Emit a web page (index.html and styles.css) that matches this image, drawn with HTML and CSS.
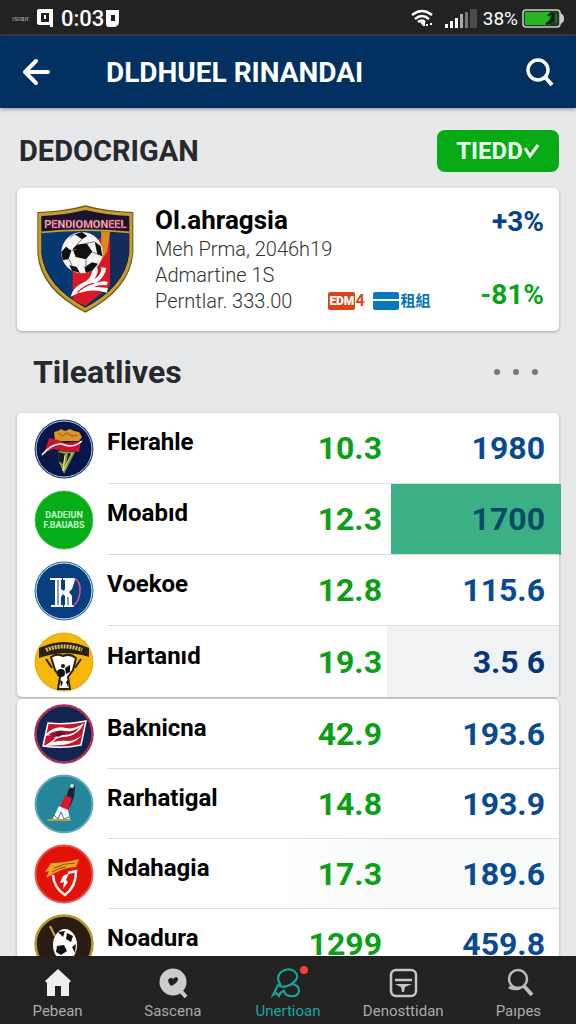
FILE: index.html
```html
<!DOCTYPE html>
<html lang="id">
<head>
<meta charset="utf-8">
<meta name="viewport" content="width=device-width, initial-scale=1">
<title>DLDHUEL RINANDAI</title>
<link rel="stylesheet" href="styles.css">
</head>
<body>
<div class="status">
  <span class="carrier">ısıaır</span>
  <svg class="sim" viewBox="0 0 16 18" width="16" height="18"><path fill="#fff" fill-rule="evenodd" d="M2 0h14v18h-3v-2H2a2 2 0 0 1-2-2V2a2 2 0 0 1 2-2zM4 4v9h8V4z"/><path stroke="#fff" stroke-width="2" d="M8 6v4"/></svg>
  <span class="clock">0:03</span>
  <svg class="badge" viewBox="0 0 13 17" width="13" height="17"><path fill="#fff" fill-rule="evenodd" d="M0 0h13v11q0 6-6 6H3q-3 0-3-3zM5 5v6h4V5z"/></svg>
  <span class="spacer"></span>
  <svg class="wifi" viewBox="0 0 22 18" width="22" height="18" fill="none" stroke="#fff" stroke-width="2.4"><path d="M1 6q10-8 20 0M4 10q7-6 14 0M7 13q4-3 7 0"/><path fill="#fff" stroke="none" d="M9 13l5 0v4h-2zM15 15h2v2h-2zM19 14h2v2h-2z"/></svg>
  <svg class="signal" viewBox="0 0 32 19" width="32" height="19"><path fill="#fff" d="M0 15h3v4H0zM5 12h3v7H5zM10 9h3v10h-3z"/><path fill="#aaa" d="M15 5h3v14h-3z"/><path fill="#777" d="M20 3h3v16h-3z"/><path fill="#4b4b4b" d="M25 0h7v19h-7z"/></svg>
  <span class="percent">38%</span>
  <svg class="battery" viewBox="0 0 42 19" width="42" height="19"><path d="M38 4q4 1 4 5.500T38 15z" fill="#ccc"/><rect x="1" y="1" width="37" height="17" rx="3" fill="#17401b" stroke="#c8cdc8" stroke-width="1.500"/><path fill="#27b324" d="M3 3h26l-2 13H3z"/><path d="M26 7q4-5 5-1t-7 9q5-1 8-5" fill="none" stroke="#0b1e0c" stroke-width="2"/><path d="M34 5v9" stroke="#3b573c" stroke-width="2"/></svg>
</div>
<header class="appbar">
  <button class="icon-btn" aria-label="Back"><svg viewBox="0 0 28 28" width="28" height="28" fill="none" stroke="#fff" stroke-width="4" stroke-linecap="round" stroke-linejoin="round"><path d="M14 3L3 14l11 11M4 14h22"/></svg></button>
  <h1 class="appbar-title">DLDHUEL RINANDAI</h1>
  <button class="icon-btn" aria-label="Search"><svg viewBox="0 0 28 28" width="28" height="28" fill="none" stroke="#fff" stroke-width="3.400"><circle cx="12" cy="12" r="10"/><path d="M19 19l7 8" stroke-width="4"/></svg></button>
</header>
<main class="content">
  <div class="section-head">
    <h2 class="heading">DEDOCRIGAN</h2>
    <button class="filter">TIEDD<svg viewBox="0 0 16 14" width="16" height="14"><path d="M1 4l5 8 8-11" fill="none" stroke="#effff0" stroke-width="3"/></svg></button>
  </div>
  <section class="card feature">
    <svg class="crest" viewBox="16 24 294 330" width="98" height="110">
      <path d="M20 48Q100 46 164 28Q230 46 308 48V170Q300 280 164 350Q26 280 20 170z" fill="#6c5716"/>
      <path d="M23 51Q105 48 164 32Q225 48 305 51V170Q296 277 164 346Q32 277 23 170z" fill="#c79d31"/>
      <path d="M32 60Q105 57 164 42Q225 57 296 60V170Q286 270 164 335Q42 270 32 170z" fill="#17152d"/>
      <path d="M34 108Q164 96 294 108V170Q284 268 164 332Q44 268 34 170z" fill="#063873"/>
      <path d="M126 180L238 108V270L164 330L126 312z" fill="#d91925"/>
      <path d="M211 106h27l-8 60-17 26z" fill="#d58b20"/>
      <path d="M238 108h55v60q-5 60-55 108z" fill="#122b5a"/>
      <path d="M32 109Q164 96 296 109" fill="none" stroke="#c79d31" stroke-width="5"/>
      <text class="crest-text" x="164" y="96" text-anchor="middle">PENDIOMONEEL</text>
      <path d="M120 302Q126 272 168 254Q186 240 184 218L200 214Q204 234 190 250Q214 238 212 214L226 216Q224 244 196 260Q216 252 232 258L228 268Q208 264 190 272L232 276L228 290Q196 280 166 286Q140 290 120 302z" fill="#fff"/>
      <path d="M140 290Q160 268 190 262" fill="none" stroke="#d91925" stroke-width="4"/>
      <circle cx="154" cy="170" r="62" fill="#f5f5f5"/>
      <path d="M138 146l30-4 17 25-19 23-31-7-9-24zM132 115l22-7 15 12-15 10zM92 168l14-16 16 12-8 25-18 4zM192 137l18 13 5 31-15-6zM184 199l18 4-17 21-19 7-5-17zM116 207l22 6 10 18-24-7z" fill="#111"/>
      <path d="M118 124l14-9M154 130l-16 16M122 164l14-4M166 190l0 24M185 167l16 8M114 189l10 18M168 142l24-5" stroke="#777" stroke-width="3"/>
    </svg>
    <div class="feature-info">
      <h3 class="feature-name">Ol.ahragsia</h3>
      <p class="feature-line">Meh Prma, 2046h19</p>
      <p class="feature-line">Admartine 1S</p>
      <div class="feature-last"><p class="feature-line">Perntlar. 333.00</p>
        <span class="tag tag-red"><b class="tag-box">EDM</b>4</span>
        <span class="tag tag-blue"><i class="flag"></i>租組</span>
      </div>
    </div>
    <div class="feature-stats"><span class="stat-blue">+3%</span><span class="stat-green">-81%</span></div>
  </section>
  <div class="section-head list-head">
    <h2 class="heading">Tileatlives</h2>
    <button class="more" aria-label="More"><i></i><i></i><i></i></button>
  </div>
  <table class="card teams">
    <colgroup><col class="c-logo"><col><col class="c-odd"><col class="c-pts"></colgroup>
    <tbody>
    <tr><td class="logo"><svg viewBox="0 0 60 60" width="60" height="60"><circle cx="30" cy="30" r="29.500" fill="#17386e"/><circle cx="30" cy="30" r="28" fill="#07164a" stroke="#b8c6dc"/><path d="M24 32l17 1-11 22-5-12z" fill="#8c9b32"/><path d="M24 33l7 2-2 10-4-3zM34 34l4 1-6 12z" fill="#101a22"/><path d="M31 36l-2 16 9-18" fill="none" stroke="#f1eaa6"/><path d="M20 13l4-1 3-2 4 2 5-2 4 2 5 1 3 5-3 4H21z" fill="#d99527"/><path d="M24 14l4 3 5-3 5 3 5-1" fill="none" stroke="#9b5d12"/><path d="M15 19q8 1 17 5l15-2-2 11-17-1-9-2-9 5z" fill="#c7162d"/><path d="M8 36q12-14 23-10 9 3 17-4" fill="none" stroke="#fff" stroke-width="1.500"/></svg></td><th scope="row">Flerahle</th><td class="odd">10.3</td><td class="pts">1980</td></tr>
    <tr><td class="logo"><svg viewBox="0 0 60 60" width="60" height="60"><circle cx="30" cy="30" r="29.500" fill="#5bcb68"/><circle cx="30" cy="30" r="28.500" fill="#05ad19"/><text class="logo-text" x="30" y="28" text-anchor="middle">DADEIUN</text><text class="logo-text" x="30" y="38" text-anchor="middle">F.BAUABS</text></svg></td><th scope="row">Moabıd</th><td class="odd">12.3</td><td class="pts hot">1700</td></tr>
    <tr><td class="logo"><svg viewBox="0 0 60 60" width="60" height="60"><circle cx="30" cy="30" r="29.500" fill="#276aa7"/><circle cx="30" cy="30" r="28" fill="#073e7d" stroke="#d6e3ef"/><path d="M16 17h12v2h-1v9l3 2 1-2v-9h-2v-2h12v2l-3 9-3 3 3 4v9h2v2H30v-2h1v-9l-2-2-2 3v8h2v2H17v-2h4V19h-5z" fill="#fff"/><path d="M24 19v25M34 36v8" stroke="#073e7d"/><path d="M40 17q7 3 6 14-1 10-7 14" fill="none" stroke="#d9568b" stroke-width="1.500"/></svg></td><th scope="row">Voekoe</th><td class="odd">12.8</td><td class="pts">115.6</td></tr>
    <tr><td class="logo"><svg viewBox="0 0 60 60" width="60" height="60"><circle cx="30" cy="30" r="29.500" fill="#e7ae1d"/><circle cx="30" cy="30" r="28" fill="#f7b80b"/><path d="M5 16Q30 4 55 16v9Q30 17 5 26z" fill="#292110"/><path d="M12 18Q30 11 48 18" fill="none" stroke="#d9bd69" stroke-width="4" stroke-dasharray="2 1"/><path d="M12 27l6 9M47 27l-6 9" stroke="#292110" stroke-width="2"/><path d="M17 25q6-4 12-1 7-3 13 2l-3 12-5 7 2 12H24l2-12-5-7z" fill="#fff" stroke="#292110" stroke-width="2"/><circle cx="27" cy="41" r="4" fill="#111"/><circle cx="29" cy="34" r="2" fill="#111"/><path d="M31 36l5-3v7l-4 2zM26 48l3 2-2 5zM34 48l-2 2 2 5z" fill="#111"/></svg></td><th scope="row">Hartanıd</th><td class="odd">19.3</td><td class="pts dim">3.5 6</td></tr>
    </tbody>
  </table>
  <table class="card teams teams-tight">
    <colgroup><col class="c-logo"><col><col class="c-odd"><col class="c-pts"></colgroup>
    <tbody>
    <tr><td class="logo"><svg viewBox="0 0 60 60" width="60" height="60"><circle cx="30" cy="30" r="28.500" fill="#112553" stroke="#a83254" stroke-width="2.500"/><path d="M14 19q20 2 38-2l-5 24q-18 4-38 1z" fill="#bd1830" stroke="#fff" stroke-width="1.500"/><path d="M12 30q9-9 20-6 8 2 18-5-6 13-20 14-7 0-11 5 9-2 15-1 7 0 14-6-7 9-20 10l-18 1q9-5 11-8-4-4-9-2z" fill="#fff"/><path d="M15 30q8-5 17-3 8 1 14-4-6 8-16 8-8 0-11 4z" fill="#a4152c"/><path d="M20 30q6-3 12-1l-8 4z" fill="#52142a"/></svg></td><th scope="row">Baknicna</th><td class="odd">42.9</td><td class="pts">193.6</td></tr>
    <tr><td class="logo"><svg viewBox="0 0 60 60" width="60" height="60"><circle cx="30" cy="30" r="28.500" fill="#24869b" stroke="#65a9b6" stroke-width="2"/><path d="M34 17l4-7 3 2-1 11-4 10-6-1z" fill="#182033"/><path d="M31 21l7 3-4 14-9-2z" fill="#d6172c"/><path d="M25 32l9 4 2 10H18z" fill="#f4f7fa"/><path d="M20 41l4 4 3-7 3 7 5-2" fill="none" stroke="#537188"/><path d="M14 45h23v2H13z" fill="#c49836"/><circle cx="38" cy="12" r="2" fill="#d7d7d7"/></svg></td><th scope="row">Rarhatigal</th><td class="odd">14.8</td><td class="pts">193.9</td></tr>
    <tr class="soft"><td class="logo"><svg viewBox="0 0 60 60" width="60" height="60"><circle cx="30" cy="30" r="28.500" fill="#e11309" stroke="#e8504b" stroke-width="2"/><path d="M19 31q1 13 12 20 11-8 11-24l-8 2" fill="none" stroke="#fff2f2" stroke-width="2.500"/><path d="M17 19q14 0 28-4l-3 8q-13 0-30 11l3-7-4 1z" fill="#eda62c"/><path d="M20 24q10-5 21-5M18 28q8-5 14-5" fill="none" stroke="#8c4b0c"/><path d="M29 32l6-3-3 7 2 2-5 7 1-7-4 1z" fill="#fff"/></svg></td><th scope="row">Ndahagia</th><td class="odd">17.3</td><td class="pts">189.6</td></tr>
    <tr><td class="logo"><svg viewBox="0 0 60 60" width="60" height="60"><circle cx="30" cy="30" r="28.500" fill="#2b1b10" stroke="#b69a2b" stroke-width="2.500"/><path d="M16 12l5 10" stroke="#d5ad41" stroke-width="2"/><ellipse cx="31" cy="31" rx="12" ry="16" fill="#fff"/><path d="M24 18l7-1-2 6zM33 19l6 3-2 6-5-3zM23 32l7-1 3 6-6 4-5-3zM38 33l4-3-1 9z" fill="#111"/></svg></td><th scope="row">Noadura</th><td class="odd">1299</td><td class="pts">459.8</td></tr>
    </tbody>
  </table>
</main>
<nav class="tabs">
  <a class="tab" href="#home"><svg viewBox="0 0 32 32" width="32" height="32"><path d="M16 2l13 12-2 2v13h-8V19h-6v10H5V16l-2-2z" fill="#eee"/></svg>Pebean</a>
  <a class="tab" href="#discover"><svg viewBox="0 0 32 32" width="32" height="32"><circle cx="16" cy="15" r="13.500" fill="#ccc"/><path d="M23 23l6 7" stroke="#ccc" stroke-width="4"/><path d="M11 13q3-4 5-1 4-4 5 0 0 4-7 7-3-3-3-6z" fill="#222"/></svg>Sascena</a>
  <a class="tab active" href="#live"><svg viewBox="0 0 32 32" width="32" height="32" fill="none" stroke="#15a9a0" stroke-width="2"><path d="M9 18Q3 11 9 5q7-5 13-1 6 5 1 10l-3 3q7 1 7 7-1 6-8 5-6 0-7-5-4 1-5 5l-3-3-3 2 5-10q4 3 9 1 4-1 6-3"/><circle cx="32" cy="3" r="4" fill="#ef3f35" stroke="none"/></svg>Unertioan</a>
  <a class="tab" href="#news"><svg viewBox="0 0 32 32" width="32" height="32" fill="none" stroke="#c5c5c5" stroke-width="2.500"><rect x="4" y="3" width="25" height="26" rx="5"/><path d="M8 13h17" /><path d="M8 17h17l-7 3-1 5h-2l-1-5z" fill="#c5c5c5" stroke="none"/></svg>Denosttidan</a>
  <a class="tab" href="#profile"><svg viewBox="0 0 32 32" width="32" height="32" fill="none" stroke="#bbb" stroke-width="2.500"><circle cx="16" cy="12" r="9"/><path d="M22 19l8 9" stroke-width="4"/><path d="M7 20q4 3 11 1" stroke-width="3"/></svg>Paıpes</a>
</nav>
</body>
</html>
```

FILE: styles.css
```css
* { box-sizing: border-box; }
body {
  margin: 0;
  height: 100vh;
  display: flex;
  flex-direction: column;
  overflow: hidden;
  background: #e7e8e9;
  color: #000;
  font-family: Roboto, "Noto Sans CJK SC", sans-serif;
}
h1, h2, h3, p { margin: 0; }
svg { display: block; flex: none; overflow: visible; }
button { border: 0; background: none; font: inherit; cursor: pointer; }

.status {
  flex: none;
  height: 36px;
  padding: 0 12px;
  display: flex;
  align-items: center;
  background: #222;
  color: #fff;
}
.carrier { width: 24px; font-size: 8px; color: #aaa; }
.clock { margin: 0 2px 0 8px; font-size: 22px; font-weight: 500; }
.sim { margin-left: 1px; }
.spacer { flex: 1; }
.signal { margin-left: 12px; }
.percent { margin: 0 4px 0 6px; font-size: 19px; }

.appbar {
  flex: none;
  height: 72px;
  padding: 0 22px;
  display: flex;
  align-items: center;
  background: #023060;
  color: #fff;
  box-shadow: 0 1px 4px #7d8da3;
}
.icon-btn { padding: 0; }
.appbar-title { flex: 1; padding: 2px 0 0 56px; font-size: 28px; font-weight: 700; line-height: 36px; white-space: nowrap; }

.content { flex: 1; min-height: 0; padding: 21px 17px 0; overflow: hidden; }
.section-head { display: flex; align-items: center; justify-content: space-between; height: 43px; padding-left: 2px; }
.heading { font-size: 29px; font-weight: 700; line-height: 40px; color: #28292c; }
.filter {
  width: 122px;
  height: 42px;
  padding: 0;
  display: flex;
  align-items: center;
  justify-content: center;
  gap: 1px;
  border-radius: 8px;
  background: #05aa15;
  color: #effff0;
  font-size: 24px;
  font-weight: 700;
}
.card { background: #fff; border-radius: 5px; box-shadow: 0 1px 3px #a5a7aa; }
.feature { display: flex; min-height: 143px; margin-top: 16px; padding: 16px 15px 0 19px; }
.feature-info { flex: 1; padding-left: 21px; white-space: nowrap; }
.feature-name { font-size: 26px; font-weight: 700; line-height: 32px; }
.feature-line { font-size: 20px; font-weight: 300; line-height: 26px; color: #333; }
.feature-last { display: flex; align-items: center; }
.tag { display: flex; align-items: center; font-size: 16px; font-weight: 700; line-height: 18px; }
.tag-red { margin-left: 36px; color: #de431c; }
.tag-box { padding: 0 1px; border-radius: 2px; background: #d9431d; color: #fff; font-size: 12px; }
.tag-blue { margin-left: 8px; gap: 2px; color: #0874b8; font-size: 15px; }
.flag { width: 26px; height: 18px; border-radius: 2px; background: linear-gradient(#0879bd 7px, #fff 7px 9px, #0879bd 9px); }
.feature-stats { display: flex; flex-direction: column; align-items: flex-end; gap: 37px; font-size: 28px; font-weight: 700; line-height: 36px; }
.stat-blue { color: #063f8d; }
.stat-green { color: #09a51a; }

.list-head { margin: 19px 0 20px; padding: 0 17px 0 16px; }
.list-head .heading { font-size: 32px; }
.more { display: flex; gap: 13px; padding: 6px 4px; }
.more i { width: 6px; height: 6px; border-radius: 50%; background: #77797b; }

.teams { width: 100%; table-layout: fixed; border-spacing: 0; margin-bottom: 2px; }
.c-logo { width: 90px; }
.c-odd { width: 110px; }
.c-pts { width: 168px; }
.teams td, .teams th { height: 71px; padding: 0; border-bottom: 1px solid #dcdee0; text-align: right; }
.teams-tight td, .teams-tight th { height: 70px; }
.teams .logo { padding-left: 17px; border-bottom: 0; }
.teams tr:last-child td, .teams tr:last-child th { border-bottom: 0; }
.teams th { padding-bottom: 12px; text-align: left; font-size: 24px; font-weight: 700; }
.teams td { font-size: 32px; font-weight: 700; }
.teams .odd { padding-right: 9px; color: #0b9f18; }
.teams .pts { padding-right: 14px; color: #084b94; }
.teams .hot { background: #3bb085; color: #064b63; box-shadow: 2px 0 #3bb085; }
.teams .dim { background: #f1f2f3; box-shadow: -4px 0 #f1f2f3; color: #06357c; }
.soft .pts { background: #f8f9f9; }
.soft .odd { background: linear-gradient(90deg, #fff, #f8f9f9); }
.logo-text { font-size: 9px; font-weight: 700; fill: #c9f5cb; }
.crest-text { font-size: 33px; font-weight: 700; fill: #f9cbd4; stroke: #c01b3c; stroke-width: 1px; }

.tabs { flex: none; height: 68px; display: flex; background: #222; }
.tab { flex: 1; display: flex; flex-direction: column; align-items: center; padding-top: 11px; gap: 3px; color: #aaa; font-size: 15px; line-height: 19px; text-decoration: none; }
.active { color: #15a9a0; }
```
